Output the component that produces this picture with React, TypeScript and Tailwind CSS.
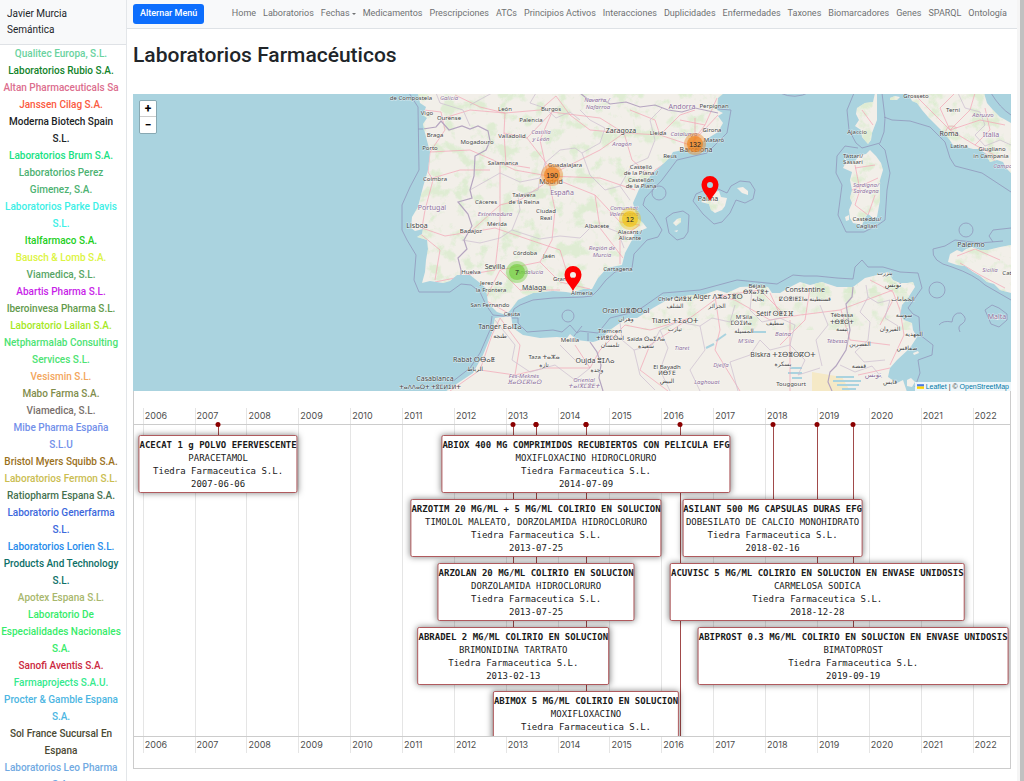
import { clsx } from "clsx";

type Lab = { name: string; color: string };

const labs: Lab[] = [
  { name: "Qualitec Europa, S.L.", color: "text-[#6ad3a0]" },
  { name: "Laboratorios Rubio S.A.", color: "text-[#12832a]" },
  { name: "Altan Pharmaceuticals Sa", color: "text-[#dc6e8e]" },
  { name: "Janssen Cilag S.A.", color: "text-[#fb5a41]" },
  { name: "Moderna Biotech Spain S.L.", color: "text-[#1b2426]" },
  { name: "Laboratorios Brum S.A.", color: "text-[#18e283]" },
  { name: "Laboratorios Perez Gimenez, S.A.", color: "text-[#4db272]" },
  { name: "Laboratorios Parke Davis S.L.", color: "text-[#3cefe6]" },
  { name: "Italfarmaco S.A.", color: "text-[#22cf1c]" },
  { name: "Bausch & Lomb S.A.", color: "text-[#dcf442]" },
  { name: "Viamedica, S.L.", color: "text-[#58a566]" },
  { name: "Abartis Pharma S.L.", color: "text-[#c81ee8]" },
  { name: "Iberoinvesa Pharma S.L.", color: "text-[#629a4b]" },
  { name: "Laboratorio Lailan S.A.", color: "text-[#a6e81f]" },
  { name: "Netpharmalab Consulting Services S.L.", color: "text-[#4ce373]" },
  { name: "Vesismin S.L.", color: "text-[#f3a65c]" },
  { name: "Mabo Farma S.A.", color: "text-[#7f8d4c]" },
  { name: "Viamedica, S.L.", color: "text-[#796f6c]" },
  { name: "Mibe Pharma España\nS.L.U", color: "text-[#7290ea]" },
  { name: "Bristol Myers Squibb S.A.", color: "text-[#9b711c]" },
  { name: "Laboratorios Fermon S.L.", color: "text-[#cabd51]" },
  { name: "Ratiopharm Espana S.A.", color: "text-[#45714f]" },
  { name: "Laboratorio Generfarma S.L.", color: "text-[#3c68dc]" },
  { name: "Laboratorios Lorien S.L.", color: "text-[#268ceb]" },
  { name: "Products And Technology S.L.", color: "text-[#0e7068]" },
  { name: "Apotex Espana S.L.", color: "text-[#a8b76c]" },
  { name: "Laboratorio De Especialidades Nacionales S.A.", color: "text-[#37ec6a]" },
  { name: "Sanofi Aventis S.A.", color: "text-[#cb2840]" },
  { name: "Farmaprojects S.A.U.", color: "text-[#35ea8e]" },
  { name: "Procter & Gamble Espana S.A.", color: "text-[#4db6e2]" },
  { name: "Sol France Sucursal En Espana", color: "text-[#4b4a33]" },
  { name: "Laboratorios Leo Pharma S.A.", color: "text-[#71aae2]" },
];

const links = [
  "Home",
  "Laboratorios",
  "Fechas",
  "Medicamentos",
  "Prescripciones",
  "ATCs",
  "Principios Activos",
  "Interacciones",
  "Duplicidades",
  "Enfermedades",
  "Taxones",
  "Biomarcadores",
  "Genes",
  "SPARQL",
  "Ontología",
];

/* ---------- map ---------- */

const land = [
  // Iberia and southern France
  "M418 93L420 103 426 107 423 115 427 118 423 124 425 133 430 152 428 170 423 187 418 207 412 217 411 228 415 231 423 229 422 234 417 237 427 240 428 249 426 260 425 272 422 283 430 281 443 283 450 281 457 275 470 275 480 283 486 288 488 303 497 312 506 315 512 308 518 300 533 293 553 291 566 292 572 293 583 289 592 289 598 278 607 268 622 265 625 253 632 240 635 233 647 228 643 223 637 218 633 203 640 187 653 173 663 164 670 157 673 152 693 148 705 140 718 132 723 123 718 116 723 113 717 110 718 98 724 93Z",
  // North Africa
  "M445 392L458 383 473 373 483 355 492 333 495 318 503 317 511 316 513 328 523 335 540 338 557 337 567 338 570 334 577 340 593 342 600 340 610 330 627 318 637 318 653 308 667 300 690 295 703 295 717 290 727 293 740 287 760 286 768 287 772 293 780 293 790 287 800 282 810 285 822 282 837 287 853 287 865 278 877 275 888 272 893 280 900 283 907 283 913 282 915 287 908 298 902 305 900 315 904 320 912 323 913 330 917 337 910 348 897 360 890 368 888 377 897 383 903 380 907 392Z",
  "M907 380L911 378 915 382 912 387 907 386Z",
  "M913 353l5-2 1 2-5 2z",
  // Balearics
  "M701 202L708 195 713 192 719 191 721 197 727 198 725 206 722 210 715 213 711 210 709 204Z",
  "M737 188L743 187 748 191 748 195 742 193Z",
  "M673 223L677 219 681 218 681 222 676 226Z",
  "M674 231l4-1-1 2z",
  // Corsica
  "M875 93L873 102 865 103 857 108 856 114 859 120 855 126 861 130 862 137 868 144 871 140 872 133 877 120 877 103 877 93Z",
  // Sardinia
  "M844 157L846 162 843 168 852 172 850 180 852 190 850 198 852 203 849 210 850 218 853 223 862 225 865 218 868 214 873 218 877 217 879 206 880 200 880 180 883 170 881 163 876 156 870 150 866 154 860 155 855 161 847 161Z",
  "M845 217l4-2 0 5-3 1z",
  // Italy
  "M908 93L912 101 917 103 922 110 928 117 936 125 943 132 949 139 953 145 962 146 973 149 979 149 985 153 990 162 997 160 1003 162 1006 168 1011 173 1011 123 1004 119 1000 117 993 110 987 103 984 93Z",
  "M890 98l5-2 5 1-3 3-7 0z",
  // Sicily
  "M948 262L950 254 957 250 962 252 966 249 972 247 980 250 988 250 1000 247 1011 245 1011 293 1000 290 994 284 987 282 980 276 973 272 965 266 957 265Z",
  "M994 316l5 2-1 2-4-2z",
];

const maritime = [
  "M409 93L418 107 419 170 410 187 402 205 402 230 407 240 416 255 414 280 419 292 450 292 461 284 471 285 480 292 486 305 493 315 503 316 512 316 514 309 520 305 533 300 553 298 583 297 592 296 598 290 606 280 615 272 632 268 634 254 647 240 658 237 662 230 653 215 643 205 645 198 662 180 677 160 707 153 718 142 727 133 731 110 718 109",
  "M492 316L490 330 480 353 470 368 452 382",
  "M418 129h5M512 318L518 318 518 323 527 332 553 330 562 332 570 325 577 333 580 331 598 333 610 318 630 313 643 307 663 293 700 290 737 280 777 284 793 275 804 276 817 276 837 278 853 279 855 267 862 260 868 267 883 267 900 272 918 273 922 288 908 308 913 314 919 317 920 335 933 345 932 355 918 360 920 373 915 387",
  "M780 93Q795 100 810 92M574 336L582 326M588 333V341",
  "M693 201L696 194 705 190 716 188 727 193 731 186 740 181 750 182 755 190 753 199 745 203 736 200 730 213 722 222 714 224 703 214Z",
  "M666 218L673 213 683 211 689 215 688 232 684 238 677 240 669 233Z",
  "M854 93L847 110 849 130 856 143 862 148 880 143 884 132 885 118 882 93M884 117L892 120 910 121 930 127 945 142 950 158 955 166 982 173 1011 192",
  "M858 148L845 146 837 156 836 173 842 185 840 200 838 215 846 232 864 232 878 225 885 220 887 190 890 173 885 150 879 144",
  "M991 93Q1000 108 1011 115M933 249L945 246 955 240 980 243 1003 241M1011 228L993 230 989 236 993 242M933 249Q931 262 952 267 975 275 985 285L1011 300M985 310L992 305 999 308 1007 314 1007 320 999 327 991 324Z",
  "M939 325Q943 320 952 322 953 312 961 313 969 319 962 324 957 326 960 332 952 336L942 333Q938 330 939 325Z",
];

const borders = [
  // Portugal / Spain
  "M423 129L436 127 441 121 449 130 462 126 470 129 478 126 488 131 490 141 486 150 475 156 474 176 470 190 472 198 458 202 468 214 472 226 464 240 467 249 458 258 461 270 461 276",
  // Pyrenees
  "M580 93L590 101 602 99 610 104 626 102 640 107 655 105 668 110 682 112 695 108 718 113",
  // Morocco / Algeria
  "M590 342L597 352 601 365 599 378 603 391",
  // Algeria / Tunisia
  "M853 287L852 297 846 304 850 330 846 350 836 366 830 372 828 382 832 391",
];

const regions = [
  "M436 93L440 103 463 110 470 126M470 105L492 93M536 93L530 103 545 108 556 118 570 112 580 120M470 190L500 173 520 182 540 178 545 163 560 150 575 148 582 153 600 143 605 128 590 120 580 110",
  "M540 178L538 190 518 196 520 210 512 230 500 238 480 243 462 240M512 230L540 239 560 236 580 238 590 228 600 225 618 232 624 248M582 153L590 175 605 190 620 186 630 200M620 186L632 165 648 158 655 140 650 120 662 108",
  "M495 320L515 345 512 360 530 372 555 365 575 380 590 368M560 345L575 360M620 322L622 340 634 350 652 345 660 330 678 322M634 350L640 375 655 390M678 322L700 326 712 318 730 322 735 305M700 326L705 350 690 370 700 391M752 290L750 310 762 322 780 318 795 325 790 345 805 360 798 375 820 368",
  "M790 345L770 350 760 340 750 355 730 362 738 391M660 330L668 348 660 370 670 391M820 305L828 325 816 340 822 366M866 285L868 297 878 303 890 300M868 297L860 312 870 322 868 340 855 352 864 362 885 360M890 300L885 318 898 326M840 365L855 372 872 366 882 378",
  "M958 93L965 108 980 112 985 125 975 135 985 146 1000 140 1011 145",
];

const roads = [
  "M430 152L445 130 441 112 424 110M430 152L428 172 433 180 425 210 422 228M430 152L470 150 500 163 530 168M426 180L460 170 490 170M422 228L445 236 470 232 500 205 520 200 550 180M418 232L440 250 435 280M435 282L470 275",
  "M444 118L470 110 505 113 540 110 556 96M505 113L504 133 527 138 550 168M527 138L552 112M504 133L506 165M552 112L600 118 624 133M556 96L570 115 590 130 624 133M455 95L480 107 505 113",
  "M548 176L570 165 600 150 624 133 660 135 690 145 718 115M548 176L540 140 552 112M548 176L515 170 500 163M548 176L555 210 552 240 540 262 500 270M548 176L595 195 620 222 640 225M548 176L600 178 635 190M635 200L655 170 690 147M624 133L632 160 650 175",
  "M500 163L500 225 495 270M595 195L600 228 623 258M640 225L620 238 620 264M540 262L560 282 590 289M500 270L520 290 560 290M500 270L485 300 508 313M495 270L460 276M530 240L560 250 570 282M472 232L495 228 530 240",
  "M660 135L680 115 695 110M690 145L705 125 717 98M680 120L705 125M695 118V145M660 135L655 120 630 110",
  "M450 391L480 370 492 335 500 318M480 370L515 375 545 368 590 368M500 318L520 345 515 375M575 345L590 368M590 368L600 350 625 325 650 330 690 318 720 296 735 300 770 320 800 315 840 310 893 290",
  "M715 296L720 330 715 350 740 391M690 318L650 345 640 370 668 391M790 320L790 350 790 391M720 296L760 290 785 315M770 293L780 315M810 288L805 320 780 345M893 292L900 310 904 335 890 365M893 292L870 280M841 310L850 340 890 345M858 375L890 368M893 300L880 325",
  "M855 165L860 190 855 205 868 215M855 168L875 165M852 190L878 178M868 215L875 195M862 110L873 125",
  "M915 95L930 110 950 130 975 145 1000 158M950 130L940 108 955 93M950 130L980 120 1005 125M950 130L970 110 975 93M975 145L990 130 985 108M985 153L1000 165M957 256L975 249 1000 260M960 263L980 275 1005 288M945 133Q948 122 957 128",
];

type Place = { x: number; y: number; t: string; kind?: "city" | "region" | "country" };

const places: Place[] = [
  { x: 411, y: 100, t: "de Compostela" },
  { x: 427, y: 115, t: "Vigo" },
  { x: 449, y: 120, t: "Ourense" },
  { x: 449, y: 100, t: "Galicia", kind: "region" },
  { x: 505, y: 111, t: "León" },
  { x: 551, y: 111, t: "Burgos" },
  { x: 531, y: 122, t: "Palencia" },
  { x: 435, y: 137, t: "Braga" },
  { x: 430, y: 150, t: "Porto" },
  { x: 477, y: 144, t: "Mogadouro" },
  { x: 512, y: 138, t: "Valladolid" },
  { x: 541, y: 134, t: "Castilla", kind: "region" },
  { x: 541, y: 141, t: "y León", kind: "region" },
  { x: 597, y: 102, t: "Navarra /", kind: "region" },
  { x: 598, y: 109, t: "Nafarroa", kind: "region" },
  { x: 503, y: 165, t: "Salamanca" },
  { x: 565, y: 167, t: "Guadalajara" },
  { x: 435, y: 181, t: "Coimbra" },
  { x: 551, y: 184, t: "Madrid", kind: "city" },
  { x: 562, y: 195, t: "España", kind: "country" },
  { x: 432, y: 210, t: "Portugal", kind: "country" },
  { x: 486, y: 204, t: "Cáceres" },
  { x: 524, y: 197, t: "Talavera" },
  { x: 524, y: 204, t: "de la Reina" },
  { x: 495, y: 216, t: "Extremadura", kind: "region" },
  { x: 546, y: 213, t: "Ciudad" },
  { x: 546, y: 220, t: "Real" },
  { x: 417, y: 228, t: "Lisboa", kind: "city" },
  { x: 497, y: 226, t: "Mérida" },
  { x: 471, y: 233, t: "Badajoz" },
  { x: 597, y: 228, t: "Albacete" },
  { x: 602, y: 250, t: "Región de", kind: "region" },
  { x: 602, y: 257, t: "Murcia", kind: "region" },
  { x: 621, y: 133, t: "Zaragoza", kind: "city" },
  { x: 658, y: 135, t: "Lleida" },
  { x: 622, y: 146, t: "Aragón", kind: "region" },
  { x: 684, y: 136, t: "Catalunya", kind: "region" },
  { x: 682, y: 109, t: "Andorra", kind: "country" },
  { x: 714, y: 108, t: "Perpignan" },
  { x: 712, y: 132, t: "Girona" },
  { x: 714, y: 142, t: "Mataró" },
  { x: 696, y: 152, t: "Barcelona", kind: "city" },
  { x: 670, y: 158, t: "Reus" },
  { x: 641, y: 169, t: "Castelló" },
  { x: 641, y: 175, t: "de la Plana /" },
  { x: 641, y: 182, t: "Castellón" },
  { x: 641, y: 188, t: "de la Plana" },
  { x: 624, y: 210, t: "Comunitat", kind: "region" },
  { x: 624, y: 216, t: "Valenciana", kind: "region" },
  { x: 630, y: 234, t: "Alacant /" },
  { x: 630, y: 240, t: "Alicante" },
  { x: 708, y: 201, t: "Palma", kind: "city" },
  { x: 525, y: 255, t: "Córdoba" },
  { x: 549, y: 258, t: "Jaén" },
  { x: 495, y: 269, t: "Sevilla", kind: "city" },
  { x: 471, y: 274, t: "Huelva" },
  { x: 530, y: 274, t: "Andalucía", kind: "region" },
  { x: 565, y: 281, t: "Granada" },
  { x: 491, y: 285, t: "Jerez de" },
  { x: 491, y: 292, t: "la Frontera" },
  { x: 534, y: 290, t: "Málaga", kind: "city" },
  { x: 582, y: 295, t: "Almería" },
  { x: 490, y: 307, t: "San Fernando" },
  { x: 512, y: 316, t: "Ceuta" },
  { x: 618, y: 271, t: "Cartagena" },
  { x: 500, y: 329, t: "Tanger ⴹⴰⵏⵊⴰ", kind: "city" },
  { x: 500, y: 338, t: "طنجة" },
  { x: 570, y: 342, t: "Melilla" },
  { x: 474, y: 362, t: "Rabat ⵔⴱⴰⵟ", kind: "city" },
  { x: 475, y: 371, t: "الرباط" },
  { x: 435, y: 381, t: "Casablanca", kind: "city" },
  { x: 430, y: 389, t: "ⵜⴰⴷⴷⴰⵔⵜ ⵜⵓⵎⵍⵉⵍⵜ" },
  { x: 544, y: 359, t: "Taza ⵜⴰⵣⴰ" },
  { x: 544, y: 367, t: "تازة" },
  { x: 524, y: 378, t: "Fès-Meknès", kind: "region" },
  { x: 524, y: 384, t: "ⴼⴰⵙ-ⵎⴽⵏⴰⵙ", kind: "region" },
  { x: 595, y: 363, t: "Oujda ⵓⵊⴷⴰ", kind: "city" },
  { x: 597, y: 372, t: "وجدة" },
  { x: 584, y: 382, t: "Oriental", kind: "region" },
  { x: 584, y: 388, t: "ⵜⴰⵏⴳⵎⵓⴹⵜ", kind: "region" },
  { x: 626, y: 313, t: "Oran ⵡⴻⵀⵔⴰⵏ", kind: "city" },
  { x: 626, y: 321, t: "وهران" },
  { x: 610, y: 333, t: "Tlemcen" },
  { x: 610, y: 340, t: "ⵜⵍⴻⵎⵙⴰⵏ" },
  { x: 610, y: 347, t: "تلمسان" },
  { x: 646, y: 341, t: "Saïda ⵙⴰⵉⴷⴰ" },
  { x: 646, y: 348, t: "سعيدة" },
  { x: 675, y: 301, t: "Chlef ⵛⵍⴻⴼ" },
  { x: 675, y: 308, t: "الشلف" },
  { x: 675, y: 323, t: "Tiaret ⵜⵉⴰⵔⵜ", kind: "city" },
  { x: 675, y: 331, t: "تيارت" },
  { x: 682, y: 350, t: "Tiaret", kind: "region" },
  { x: 718, y: 299, t: "Alger ⴷⵣⴰⵢⴻⵔ", kind: "city" },
  { x: 717, y: 308, t: "الجزائر" },
  { x: 757, y: 288, t: "Béjaïa" },
  { x: 756, y: 294, t: "ⴱⴳⴰⵢⴻⵜ" },
  { x: 758, y: 301, t: "بجاية" },
  { x: 805, y: 292, t: "Constantine", kind: "city" },
  { x: 805, y: 301, t: "ⵇⵙⴻⵏⵟⵉⵏⴰ قسنطينة" },
  { x: 744, y: 319, t: "M'Sila" },
  { x: 741, y: 325, t: "ⵎⵙⵉⵍⴰ" },
  { x: 744, y: 333, t: "المسيلة" },
  { x: 775, y: 316, t: "Sétif ⵙⵟⵉⴼ", kind: "city" },
  { x: 775, y: 325, t: "سطيف" },
  { x: 746, y: 343, t: "M'Sila", kind: "region" },
  { x: 783, y: 336, t: "Batna", kind: "region" },
  { x: 783, y: 357, t: "Biskra ⵜⵉⴱⴻⵙⴽⵔⵜ", kind: "city" },
  { x: 783, y: 366, t: "بسكرة" },
  { x: 667, y: 369, t: "El Bayadh" },
  { x: 667, y: 375, t: "ⵍⴱⵢⴹ" },
  { x: 667, y: 383, t: "البيض" },
  { x: 707, y: 384, t: "Laghouat", kind: "region" },
  { x: 721, y: 367, t: "Djelfa", kind: "region" },
  { x: 791, y: 386, t: "Touggourt" },
  { x: 842, y: 317, t: "Tébessa" },
  { x: 842, y: 324, t: "ⵜⴱⴻⵙⵜ" },
  { x: 842, y: 331, t: "تبسة" },
  { x: 837, y: 343, t: "Tébessa", kind: "region" },
  { x: 885, y: 275, t: "بنزرت" },
  { x: 893, y: 287, t: "تونس", kind: "city" },
  { x: 903, y: 301, t: "الحمامات" },
  { x: 904, y: 317, t: "سوسة" },
  { x: 890, y: 331, t: "القيروان" },
  { x: 914, y: 336, t: "المهدية" },
  { x: 860, y: 346, t: "القصرين" },
  { x: 907, y: 350, t: "صفاقس" },
  { x: 859, y: 368, t: "قفصة" },
  { x: 873, y: 377, t: "تونس", kind: "country" },
  { x: 890, y: 384, t: "قابس" },
  { x: 857, y: 134, t: "Ajaccio" },
  { x: 853, y: 158, t: "Tàttari/" },
  { x: 853, y: 164, t: "Sassari" },
  { x: 866, y: 187, t: "Sardigna/", kind: "region" },
  { x: 866, y: 193, t: "Sardegna", kind: "region" },
  { x: 867, y: 221, t: "Casteddu/" },
  { x: 867, y: 228, t: "Cagliari" },
  { x: 916, y: 98, t: "Grosseto" },
  { x: 953, y: 112, t: "Terni" },
  { x: 949, y: 136, t: "Roma", kind: "city" },
  { x: 983, y: 117, t: "Abruzzo", kind: "region" },
  { x: 991, y: 137, t: "Italia", kind: "country" },
  { x: 959, y: 148, t: "Latina" },
  { x: 992, y: 151, t: "Giugliano" },
  { x: 991, y: 158, t: "in Campania" },
  { x: 1007, y: 168, t: "Campania", kind: "region" },
  { x: 971, y: 247, t: "Palermo", kind: "city" },
  { x: 990, y: 272, t: "Sicilia", kind: "region" },
  { x: 1013, y: 275, t: "Catania" },
  { x: 997, y: 319, t: "Malta", kind: "country" },
];

const clusters = [
  { x: 552, y: 175, n: 190, color: "#f18017" },
  { x: 695, y: 144, n: 132, color: "#f18017" },
  { x: 630, y: 219, n: 12, color: "#f0c20c" },
  { x: 517, y: 272, n: 7, color: "#6ecc39" },
];

const pins = [
  { x: 710, y: 201 },
  { x: 573, y: 291 },
];

const Map = () => (
  <section
    aria-label="Mapa de laboratorios"
    className="relative h-[297px] overflow-hidden bg-[#aad3df]"
  >
    <svg
      className="size-full"
      viewBox="133 94 878 297"
      preserveAspectRatio="xMidYMid slice"
      fontFamily="'Noto Sans', 'DejaVu Sans', sans-serif"
    >
      <defs>
        <clipPath id="land">
          <path d={land.join("")} />
        </clipPath>
        <filter id="woods" x="0" y="0" width="100%" height="100%">
          <feTurbulence type="fractalNoise" baseFrequency="0.07" numOctaves="5" seed="8" />
          <feColorMatrix values="0 0 0 0 0.7 0 0 0 0 0.84 0 0 0 0 0.62 6 0 0 0 -3.1" />
        </filter>
      </defs>

      {land.map((d) => (
        <path key={d} d={d} fill="#f2efe9" />
      ))}
      <g clipPath="url(#land)">
        <rect x="400" y="93" width="611" height="200" filter="url(#woods)" opacity="0.8" />
        <rect x="480" y="280" width="440" height="50" filter="url(#woods)" opacity="0.7" />
        <path d="M812 372l30 5 8 14h-38z" fill="#f5e9c6" />
        <path
          d="M836 377h18M833 381h28M837 385h22M842 389h14M790 368h12M788 373h14M792 378h10M706 348l8-4M716 341l10-7M752 332h14"
          stroke="#aad3df"
          strokeWidth="2"
        />
        <g fill="none" stroke="#f4a3b4" strokeWidth="0.7">
          {roads.map((d) => (
            <path key={d} d={d} />
          ))}
        </g>
        <g fill="none" stroke="#cbbdd0" strokeWidth="0.7">
          {regions.map((d) => (
            <path key={d} d={d} />
          ))}
        </g>
        <g fill="none" stroke="#b5a5c0" strokeWidth="1.2">
          {borders.map((d) => (
            <path key={d} d={d} />
          ))}
        </g>
      </g>
      <g fill="none" stroke="#9197bb" strokeWidth="0.8" strokeLinejoin="round">
        {maritime.map((d) => (
          <path key={d} d={d} />
        ))}
        <circle cx="659" cy="193" r="7" />
        <circle cx="568" cy="316" r="6" />
        <circle cx="966" cy="230" r="7" />
        <circle cx="937" cy="290" r="8" />
      </g>

      <g textAnchor="middle" paintOrder="stroke" strokeWidth="1" strokeLinejoin="round">
        {places.map(({ x, y, t, kind }) => (
          <text
            key={`${t}${x}${y}`}
            x={x}
            y={y}
            fontSize={kind === "city" || kind === "country" ? 7 : 6}
            fontStyle={kind === "region" ? "italic" : "normal"}
            fill={kind === "region" || kind === "country" ? "#8d6f9c" : "#444"}
            stroke="#ffffff99"
          >
            {t}
          </text>
        ))}
      </g>

      <g
        textAnchor="middle"
        fontSize="7"
        fontFamily="'Liberation Sans', Arial, sans-serif"
        fill="#222"
      >
        {clusters.map(({ x, y, n, color }) => (
          <g key={n}>
            <circle cx={x} cy={y} r="11" fill={color} opacity="0.4" />
            <circle cx={x} cy={y} r="8" fill={color} opacity="0.65" />
            <text x={x} y={y + 3}>
              {n}
            </text>
          </g>
        ))}
      </g>
      {pins.map(({ x, y }) => (
        <path
          key={x}
          transform={`translate(${x} ${y})`}
          fill="red"
          fillRule="evenodd"
          d="M0 0C-3-6-8.500-10-8.500-16.500A8.500 8.500 0 0 1 8.500-16.500C8.500-10 3-6 0 0ZM0-19a3 3 0 1 0 0 6a3 3 0 1 0 0-6Z"
        />
      ))}
    </svg>

    <div className="absolute top-1.5 left-1.5 flex w-[18px] flex-col overflow-hidden rounded-xs border border-black/20 text-xs leading-4 font-bold text-black">
      <button type="button" aria-label="Acercar" className="h-4 border-b border-[#ccc] bg-white">
        +
      </button>
      <button type="button" aria-label="Alejar" className="h-4 bg-white">
        −
      </button>
    </div>

    <div className="absolute right-0 bottom-0 flex items-center gap-0.5 bg-white/80 px-0.5 font-['Liberation_Sans',Arial,sans-serif] text-[7px] leading-[9px] text-[#333]">
      <svg className="h-[5px] w-[7px]" viewBox="0 0 12 8" aria-hidden="true">
        <path fill="#4c7be1" d="M0 0h12v4H0z" />
        <path fill="#ffd500" d="M0 4h12v4H0z" />
      </svg>
      <a href="#leaflet" className="text-[#0078a8]">
        Leaflet
      </a>
      <span>| ©</span>
      <a href="#osm" className="text-[#0078a8]">
        OpenStreetMap
      </a>
    </div>
  </section>
);

/* ---------- timeline ---------- */

type Event = {
  at: number; // % of the visible range
  row: number;
  name?: string;
  substance?: string;
  date?: string;
};

const events: Event[] = [
  { at: 43.3, row: 3, name: "ABRADEL 2 MG/ML COLIRIO EN SOLUCION", substance: "BRIMONIDINA TARTRATO", date: "2013-02-13" },
  { at: 45.9, row: 2, name: "ARZOLAN 20 MG/ML COLIRIO EN SOLUCION", substance: "DORZOLAMIDA HIDROCLORURO", date: "2013-07-25" },
  { at: 45.9, row: 1, name: "ARZOTIM 20 MG/ML + 5 MG/ML COLIRIO EN SOLUCION", substance: "TIMOLOL MALEATO, DORZOLAMIDA HIDROCLORURO", date: "2013-07-25" },
  { at: 51.6, row: 4, name: "ABIMOX 5 MG/ML COLIRIO EN SOLUCION", substance: "MOXIFLOXACINO", date: "2014-07-11" },
  { at: 51.6, row: 0, name: "ABIOX 400 MG COMPRIMIDOS RECUBIERTOS CON PELICULA EFG", substance: "MOXIFLOXACINO HIDROCLORURO", date: "2014-07-09" },
  { at: 62.3, row: 5 },
  { at: 82.1, row: 3, name: "ABIPROST 0.3 MG/ML COLIRIO EN SOLUCION EN ENVASE UNIDOSIS", substance: "BIMATOPROST", date: "2019-09-19" },
  { at: 78, row: 2, name: "ACUVISC 5 MG/ML COLIRIO EN SOLUCION EN ENVASE UNIDOSIS", substance: "CARMELOSA SODICA", date: "2018-12-28" },
  { at: 72.9, row: 1, name: "ASILANT 500 MG CAPSULAS DURAS EFG", substance: "DOBESILATO DE CALCIO MONOHIDRATO", date: "2018-02-16" },
  { at: 9.6, row: 0, name: "ACECAT 1 g POLVO EFERVESCENTE", substance: "PARACETAMOL", date: "2007-06-06" },
];

const years = Array.from({ length: 17 }, (_, i) => 2006 + i);

const Axis = ({ className }: { className?: string }) => (
  <div
    className={clsx(
      "flex pl-[1%] font-[Inter,sans-serif] text-[9px] leading-4 text-[#4d4d4d]",
      className,
    )}
  >
    {years.map((year) => (
      <span key={year} className="w-[5.98%] shrink-0 border-l border-[#e5e5e5] pl-px">
        {year}
      </span>
    ))}
  </div>
);

const Timeline = () => (
  <section
    aria-label="Cronología de medicamentos"
    className="flex h-[378px] flex-col overflow-hidden border border-t-0 border-[#ccc]"
  >
    <Axis className="h-[33px] pt-[17px]" />

    <div className="relative flex-1 border-y border-[#ccc]">
      <div className="flex h-full overflow-hidden pl-[1%]">
        {years.map((year) => (
          <div key={year} className="w-[5.98%] shrink-0 border-l border-[#e5e5e5]" />
        ))}
      </div>

      <div className="absolute inset-0 overflow-hidden">
        {events.map(({ at, row }) => (
          <div
            key={`${at}-${row}`}
            className="absolute top-0 w-px bg-[#a14a4a]"
            style={{ left: `${at}%`, height: 10 + row * 64 }}
          />
        ))}
        {events.map(
          ({ at, row, name, substance, date }) =>
            name && (
              <article
                key={name}
                className="absolute -translate-x-1/2 rounded-xs border border-[#b05a5e] bg-white pt-[3px] pb-px text-center font-['DejaVu_Sans_Mono',monospace] text-[9px] leading-[13px] whitespace-nowrap text-[#1a1a1a] shadow-[0_0_6px_rgba(0,0,0,0.5)]"
                style={{ left: `${at}%`, top: 10 + row * 64 }}
              >
                <h2 className="font-bold">{name}</h2>
                <p>{substance}</p>
                <p>Tiedra Farmaceutica S.L.</p>
                <p>{date}</p>
              </article>
            ),
        )}
      </div>

      {events.map(({ at, row }) => (
        <i
          key={`${at}-${row}`}
          className="absolute -top-[3px] size-[5px] -translate-x-1/2 rounded-full bg-[#8b0000]"
          style={{ left: `${at}%` }}
        />
      ))}
    </div>

    <Axis className="h-[31px] pb-[15px]" />
  </section>
);

/* ---------- page ---------- */

const Sidebar = () => (
  <aside className="w-[127px] shrink-0 overflow-hidden border-r border-[#e3e6e9] text-[10px]">
    <div className="border-b border-[#dfe2e6] bg-[#f8f9fa] px-[7px] py-1.5 leading-4 text-[#212529]">
      Javier Murcia
      <br />
      Semántica
    </div>
    <ul className="pr-1 text-center leading-[17px] font-medium whitespace-pre-line">
      {labs.map(({ name, color }, i) => (
        <li key={i}>
          <a href="#laboratorio" className={color}>
            {name}
          </a>
        </li>
      ))}
    </ul>
  </aside>
);

const Navbar = () => (
  <header className="flex h-[29px] items-center justify-between border-b border-[#dee2e6] bg-[#f8f9fa] pr-[10px] pb-px pl-1.5">
    <button
      type="button"
      className="h-5 rounded-[3px] bg-[#0d6efd] px-[7px] text-[9px] font-medium whitespace-nowrap text-white"
    >
      Alternar Menú
    </button>
    <nav className="flex gap-[7px] text-[9px] whitespace-nowrap text-[#6f7172]">
      {links.map((link) => (
        <a key={link} href={`#${link}`} className="flex items-center gap-0.5">
          {link}
          {link === "Fechas" && (
            <span className="border-x-2 border-t-2 border-x-transparent border-t-current" />
          )}
        </a>
      ))}
    </nav>
  </header>
);

const App = () => {
  return (
    <div className="flex h-screen overflow-hidden bg-white font-[Roboto,sans-serif] text-[#212529]">
      <Sidebar />
      <div className="min-w-0 flex-1">
        <Navbar />
        <main className="px-1.5">
          <h1 className="pt-3 pb-[25px] text-[21px] leading-7 font-medium">
            Laboratorios Farmacéuticos
          </h1>
          <Map />
          <Timeline />
        </main>
      </div>
      <div className="w-[7px] shrink-0 border-r-4 border-[#c1c1c1] bg-[#f5f5f5]" />
    </div>
  );
};

export default App;
